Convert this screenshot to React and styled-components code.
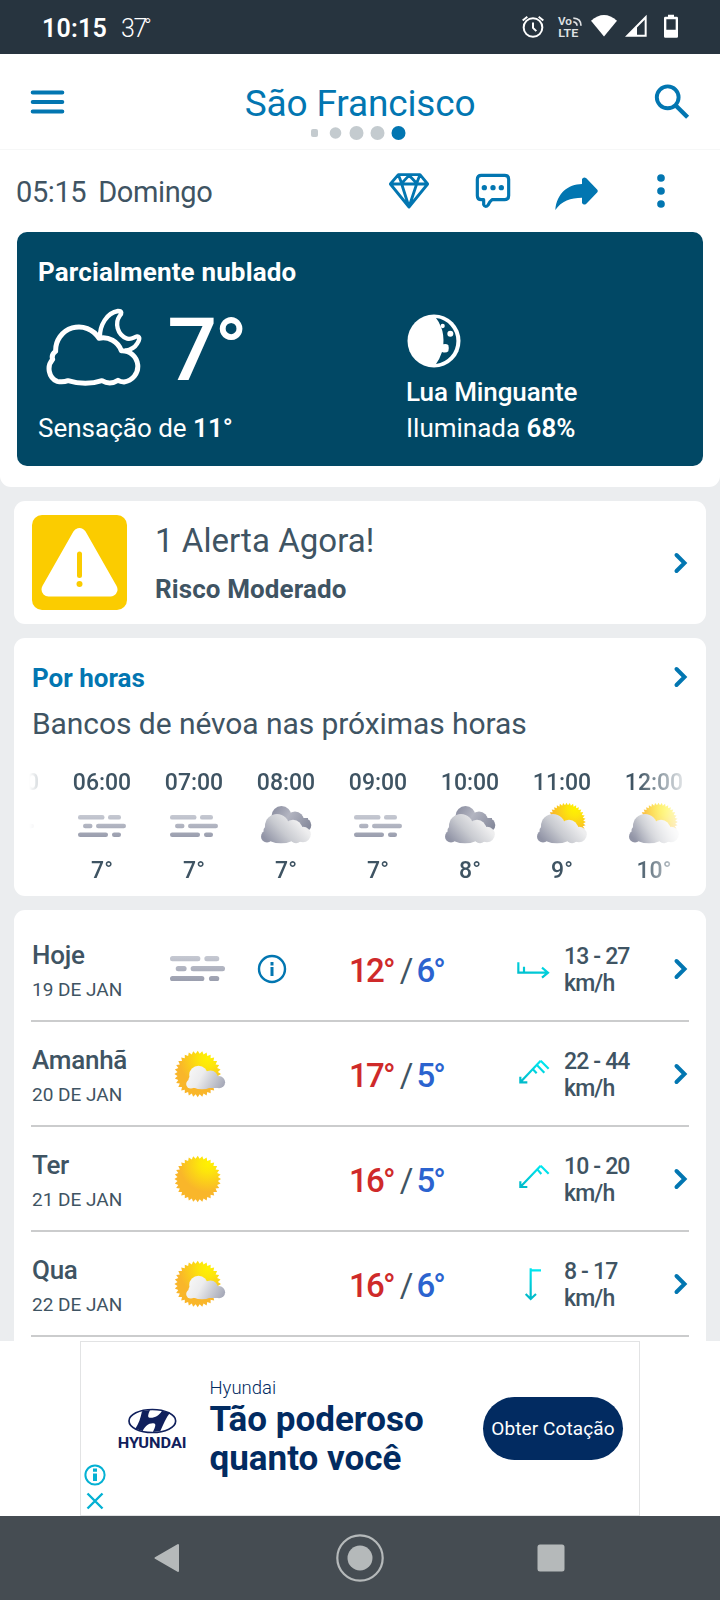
import React from "react";
import styled, { createGlobalStyle } from "styled-components";

const GlobalStyle = createGlobalStyle`
  * { box-sizing: border-box; }
  body { margin: 0; background: #fff; font-family: Roboto, sans-serif; }
  svg { display: block; flex: none; }
`;

const BLUE = "#0276b1";
const SLATE = "#3f5463";

const Screen = styled.div`
  width: 720px;
  height: 1600px;
  display: flex;
  flex-direction: column;
  overflow: hidden;
  color: ${SLATE};
  white-space: nowrap;
`;

/* status bar */

const StatusBar = styled.div`
  height: 54px;
  flex: none;
  display: flex;
  align-items: center;
  justify-content: space-between;
  padding: 0 34px 0 42px;
  background: #27343f;
  color: #fff;
`;

const StatusSide = styled.div`
  display: flex;
  align-items: center;
  padding-top: 4px;
`;

const Clock = styled.span`
  font-size: 25px;
  font-weight: 600;
  line-height: 50px;
  letter-spacing: 0.2px;
`;

const StatusTemp = styled.span`
  margin-left: 14px;
  font-size: 25px;
  font-weight: 300;
  line-height: 46px;
  letter-spacing: -1.4px;
`;

const Degree = styled.span`
  margin-left: -2px;
  font-size: 20px;
  line-height: 20px;
  vertical-align: 4px;
`;

/* top bar */

const TopBar = styled.header`
  height: 96px;
  flex: none;
  display: flex;
  align-items: center;
  justify-content: space-between;
  padding: 0 30px;
  border-bottom: 1px solid #f6f7f7;
`;

const SearchIcon = styled.svg`
  margin-bottom: 1px;
`;

const CityBlock = styled.div`
  display: flex;
  flex-direction: column;
  align-items: center;
  gap: 1px;
  padding-top: 20px;
`;

const City = styled.h1`
  margin: 0;
  font-size: 37px;
  font-weight: 400;
  line-height: 42px;
  letter-spacing: -0.15px;
  color: ${BLUE};
`;

/* summary */

const Content = styled.main`
  height: 1191px;
  flex: none;
  overflow: hidden;
  background: #ebedef;
`;

const Summary = styled.section`
  height: 337px;
  padding: 0 17px;
  background: #fff;
  border-radius: 0 0 11px 11px;
`;

const InfoRow = styled.div`
  height: 82px;
  display: flex;
  justify-content: space-between;
  align-items: center;
  padding-right: 35px;
`;

const LocalTime = styled.div`
  display: flex;
  gap: 12px;
  font-size: 29px;
  line-height: 40px;
  letter-spacing: -0.4px;
  padding-top: 2px;
  margin-left: -1px;
`;

const Panel = styled.div`
  height: 234px;
  display: grid;
  grid-template-columns: 368px 1fr;
  padding-left: 21px;
  border-radius: 10px;
  background: #014865;
  color: #fff;
`;

const PanelNow = styled.div`
  padding-top: 24px;
`;

const PanelMoon = styled.div`
  padding-top: 82px;

  svg { margin-left: 1px; }
`;

const MoonName = styled.div`
  margin-top: 6px;
  font-size: 26px;
  font-weight: 500;
  line-height: 36px;
  letter-spacing: -0.1px;
`;

const Condition = styled.div`
  font-size: 26px;
  font-weight: 700;
  line-height: 32px;
  letter-spacing: 0.15px;
`;

const NowRow = styled.div`
  display: flex;
  height: 88px;
  margin: 18px 0;
  padding: 1px 0 0 7px;
`;

const NowTemp = styled.span`
  margin: -1px 0 0 24px;
  font-size: 88px;
  font-weight: 500;
  line-height: 88px;
  letter-spacing: -3px;
`;

const PanelText = styled.div`
  font-size: 26px;
  line-height: ${(p) => p.$line || 32}px;
  b { font-weight: 600; }
`;

/* cards */

const Cards = styled.div`
  display: flex;
  flex-direction: column;
  gap: 14px;
  padding: 14px;
`;

const Card = styled.section`
  background: #fff;
  border-radius: 11px;
  flex: none;
`;

const AlertCard = styled(Card)`
  height: 123px;
  display: flex;
  align-items: center;
  padding: 0 18px;
`;

const AlertBadge = styled.div`
  width: 95px;
  height: 95px;
  display: flex;
  justify-content: center;
  border-radius: 10px;
  background: #fbcc00;
  padding-top: 12px;
`;

const AlertText = styled.div`
  flex: 1;
  align-self: flex-start;
  margin-left: 28px;
  padding-top: 20px;
`;

const AlertTitle = styled.div`
  font-size: 33px;
  line-height: 40px;
  letter-spacing: 0.05px;
`;

const AlertLevel = styled.div`
  margin-top: 12px;
  font-size: 26px;
  font-weight: 700;
  line-height: 32px;
  letter-spacing: 0.1px;
`;

const HoursCard = styled(Card)`
  height: 258px;
  padding-top: 24px;
`;

const HoursHead = styled.div`
  display: flex;
  justify-content: space-between;
  align-items: center;
  height: 32px;
  padding: 0 18px;
  font-size: 26px;
  font-weight: 700;
  color: ${BLUE};

  svg { margin-bottom: 2px; }
`;

const HoursSummary = styled.div`
  margin-top: 10px;
  padding: 0 18px;
  font-size: 30px;
  line-height: 40px;
  letter-spacing: -0.07px;
`;

const HoursStrip = styled.div`
  width: 663px;
  height: 126px;
  margin: 24px 0 0 15px;
  overflow: hidden;
  mask-image: linear-gradient(90deg, transparent 0, #000 45px, #000 607px, transparent 663px);
`;

const HoursTrack = styled.div`
  display: flex;
  margin-left: -65px;
`;

const Hour = styled.div`
  width: 92px;
  flex: none;
  display: flex;
  flex-direction: column;
  align-items: center;
  font-size: 23px;
  font-weight: 500;
  line-height: 30px;
`;

const HourIcon = styled.div`
  height: 58px;
  display: flex;
  align-items: center;
  padding-bottom: 3px;
`;

const DaysCard = styled(Card)`
  height: 600px;
  padding: 7px 17px 0;
`;

const Day = styled.div`
  height: 105px;
  display: grid;
  grid-template-columns: 135px 66px 116px 167px 48px 1fr 15px;
  align-items: center;
  border-bottom: 2px solid #cbcccd;
  padding: 0 1px;
`;

const DayLabel = styled.div`
  padding-top: 8px;
`;

const DayName = styled.div`
  font-size: 26px;
  font-weight: 500;
  line-height: 34px;
  letter-spacing: -0.25px;
`;

const DayDate = styled.div`
  font-size: 19px;
  line-height: 36px;
`;

const DayIcon = styled.div`
  display: flex;
  justify-content: center;
  width: 60px;
`;

const InfoCell = styled.div`
  padding-left: 24px;
`;

const DayTemps = styled.div`
  font-size: 33px;
  font-weight: 500;
  line-height: 40px;
  padding-top: 4px;
  display: flex;
`;

const Temp = styled.span`
  color: ${(p) => (p.$max ? "#cf2a2a" : "#2b63cf")};
  letter-spacing: -1.8px;
`;

const Slash = styled.span`
  margin: 0 3px 0 6px;
  font-weight: 400;
`;

const Wind = styled.div`
  font-size: 23px;
  font-weight: 500;
  line-height: 27px;
  letter-spacing: -0.85px;
  padding-top: 2px;
`;

/* ad */

const AdArea = styled.aside`
  height: 175px;
  flex: none;
  display: flex;
  justify-content: center;
  background: #fff;
`;

const AdBox = styled.div`
  position: relative;
  width: 560px;
  height: 175px;
  display: grid;
  grid-template-columns: 128.5px 1fr 140px;
  align-items: center;
  padding-right: 16px;
  border: 1px solid #e2e3e4;
  color: #022b61;
`;

const AdChoices = styled.div`
  position: absolute;
  left: 3px;
  bottom: 3px;
`;

const AdLogo = styled.div`
  padding-left: 36px;
`;

const AdBrand = styled.div`
  font-size: 18.5px;
  font-weight: 300;
  line-height: 22px;
  margin-bottom: 1px;
`;

const AdTitle = styled.div`
  font-size: 35px;
  font-weight: 700;
  line-height: 39px;
`;

const AdCopy = styled.div`
  padding-bottom: 3px;
`;

const AdButton = styled.button`
  height: 63px;
  padding: 0;
  border: 0;
  border-radius: 32px;
  background: #022b61;
  color: #fff;
  font-family: inherit;
  font-size: 19px;
  letter-spacing: 0.1px;
`;

const NavBar = styled.nav`
  height: 84px;
  flex: none;
  display: flex;
  align-items: center;
  justify-content: space-between;
  padding: 0 155px 0 153px;
  background: #454c52;
`;

const CLOUD = (
  <>
    <circle cx="21" cy="28" r="12" />
    <circle cx="37" cy="31" r="9.3" />
    <circle cx="47" cy="36.5" r="7.8" />
    <circle cx="11" cy="38.5" r="6" />
    <circle cx="14" cy="33" r="6.5" />
    <ellipse cx="25" cy="39" rx="14" ry="6.3" />
    <ellipse cx="40" cy="39.6" rx="6" ry="5.6" />
    <rect x="14" y="28" width="32" height="14" />
  </>
);

function teeth(cx, cy, outer, inner, count) {
  const pts = [];
  for (let i = 0; i < count * 2; i++) {
    const r = i % 2 ? inner : outer;
    const a = (Math.PI * i) / count;
    pts.push((cx + r * Math.sin(a)).toFixed(2) + "," + (cy - r * Math.cos(a)).toFixed(2));
  }
  return pts.join(" ");
}

const HiddenSvg = styled.svg`
  position: absolute;
`;

const Gradients = () => (
  <HiddenSvg width="0" height="0">
    <defs>
      <linearGradient id="front" gradientUnits="userSpaceOnUse" x1="14" y1="46" x2="40" y2="22">
        <stop offset="0" stopColor="#9194a6" />
        <stop offset="0.5" stopColor="#c8cad0" />
        <stop offset="1" stopColor="#eeeeef" />
      </linearGradient>
      <linearGradient id="back" gradientUnits="userSpaceOnUse" x1="18" y1="10" x2="52" y2="32">
        <stop offset="0" stopColor="#8d90a2" />
        <stop offset="0.4" stopColor="#b3b5c1" />
        <stop offset="1" stopColor="#85899b" />
      </linearGradient>
      <linearGradient id="small" gradientUnits="userSpaceOnUse" x1="22" y1="26" x2="54" y2="44">
        <stop offset="0" stopColor="#f6f6f6" />
        <stop offset="0.35" stopColor="#ececed" />
        <stop offset="1" stopColor="#a6a9b8" />
      </linearGradient>
      <radialGradient id="sun" cx="0.72" cy="0.16" r="0.62">
        <stop offset="0" stopColor="#fff200" />
        <stop offset="0.3" stopColor="#fde60b" />
        <stop offset="1" stopColor="#f9b62a" />
      </radialGradient>
      <linearGradient id="fog" gradientUnits="userSpaceOnUse" x1="0" y1="0" x2="0" y2="22">
        <stop offset="0" stopColor="#c6c9d2" />
        <stop offset="1" stopColor="#9a9eae" />
      </linearGradient>
      <linearGradient id="wind" gradientUnits="userSpaceOnUse" x1="20" y1="-45" x2="-5" y2="30">
        <stop offset="0" stopColor="#00eaf2" />
        <stop offset="1" stopColor="#00bccb" />
      </linearGradient>
    </defs>
  </HiddenSvg>
);

const Fog = ({ width }) => (
  <svg width={width} height={(width * 22) / 48} viewBox="0 0 48 22" fill="url(#fog)">
    <rect x="0" y="0" width="26.5" height="4.6" rx="2.2" />
    <rect x="30" y="0" width="13" height="4.6" rx="2.2" />
    <rect x="5" y="8.7" width="9.5" height="4.6" rx="2.2" />
    <rect x="18" y="8.7" width="30" height="4.6" rx="2.2" />
    <rect x="0" y="17.4" width="30" height="4.6" rx="2.2" />
    <rect x="34" y="17.4" width="9" height="4.6" rx="2.2" />
  </svg>
);

const Cloudy = () => (
  <svg width="60" height="58" viewBox="0 -1 60 58">
    <g fill="url(#back)">
      <circle cx="25.5" cy="18" r="10" />
      <circle cx="39" cy="22.5" r="9" />
      <circle cx="48.5" cy="27" r="6.8" />
      <rect x="28" y="20" width="24" height="12" />
    </g>
    <g fill="url(#front)">{CLOUD}</g>
  </svg>
);

const SunBehindCloud = () => (
  <svg width="60" height="58" viewBox="0 -1 60 58">
    <polygon fill="url(#sun)" points={teeth(34.5, 24, 19.3, 16.8, 36)} />
    <g fill="url(#front)">{CLOUD}</g>
  </svg>
);

const Sun = ({ cloud }) => (
  <svg width="60" height="60" viewBox="-1 0 60 60">
    <polygon fill="url(#sun)" points={teeth(29.7, 30, 23.3, 20.3, 32)} />
    {cloud && (
      <g fill="url(#small)">
        <circle cx="30.5" cy="31" r="9.3" />
        <circle cx="42.5" cy="34" r="7.6" />
        <circle cx="51" cy="38.2" r="6.1" />
        <circle cx="22.8" cy="40" r="4.6" />
        <circle cx="25" cy="36" r="4.6" />
        <ellipse cx="34" cy="40" rx="11" ry="5.2" />
        <rect x="24" y="33" width="27" height="11" rx="3" />
      </g>
    )}
  </svg>
);

const Chevron = () => (
  <svg width="15" height="22" viewBox="0 0 15 22" fill="none" stroke={BLUE} strokeWidth="4" strokeLinecap="round">
    <path d="M3.5 3L11.5 11L3.5 19" />
  </svg>
);

const NightCloud = () => (
  <svg width="98.3" height="80" viewBox="136 245 295 240" fill="none" stroke="#fff" strokeWidth="15" strokeLinejoin="round">
    <path d="M168 378A70 70 0 0 1 298 339A58 58 0 0 1 365 376A47.2 47.2 0 0 1 373 470Q362 470 355 465Q331 480 307 466Q258 482 205 466Q190 472 172 468A42 42 0 0 1 159 402Q154 388 168 378Z" />
    <path d="M301 337C299 300 322 262 355 257C368 257 367 265 360 272C346 292 351 328 383 340C398 343 402 335 413 333C423 334 419 345 413 354C406 366 396 373 377 376" strokeWidth="13" />
  </svg>
);

const Moon = () => (
  <svg width="54" height="54" viewBox="141 267 162 162">
    <circle cx="222" cy="348" r="79.5" fill="#fff" />
    <path fill="#014865" d="M228 279A69.5 69.5 0 0 1 228 417Q239 402 246 381Q258 385 265 379Q268 370 265 360Q259 356 250 358Q252 328 244 308Q238 291 228 279Z" />
    <circle cx="271" cy="326" r="9" fill="#fff" />
    <circle cx="248" cy="303" r="6.5" fill="#fff" />
  </svg>
);

const StatusIcons = () => (
  <svg width="166" height="30" viewBox="480 36.5 498 90" fill="#fff" stroke="none">
    <g fill="none" stroke="#fff" strokeWidth="6">
      <circle cx="519" cy="83" r="28" />
      <path d="M519 68V84L529 94" />
      <path d="M488 62L502 51M536 51L550 62" />
    </g>
    <text x="594" y="75" fontSize="31" fontWeight="600" fill="#dfe1e3" textLength="42" lengthAdjust="spacingAndGlyphs">Vo</text>
    <text x="595" y="111" fontSize="35" fontWeight="600" fill="#dfe1e3" textLength="60" lengthAdjust="spacingAndGlyphs">LTE</text>
    <path d="M640 55Q663 56 663 78M640 66Q651 67 651 78" fill="none" stroke="#dfe1e3" strokeWidth="5" />
    <path d="M693 63Q732 28 771 63L732 110Z" />
    <path d="M860 45V111H795ZM854 60L831 83V105H854Z" fillRule="evenodd" />
    <path d="M924 45H942V51H950Q954 51 954 55V110Q954 114 950 114H916Q912 114 912 110V55Q912 51 916 51H924ZM919 58V90H947V58Z" fillRule="evenodd" />
  </svg>
);

const Dots = () => (
  <svg width="104" height="14" viewBox="308 0 104 14" fill="#c4cbcf">
    <rect x="311" y="3" width="7" height="8" rx="2" />
    <circle cx="335.5" cy="7" r="5.8" />
    <circle cx="356.5" cy="7" r="7" />
    <circle cx="377.5" cy="7" r="7" />
    <circle cx="398.5" cy="7" r="7" fill={BLUE} />
  </svg>
);

const Actions = () => (
  <svg width="281" height="40" viewBox="81 510 843 120" fill="none" stroke={BLUE} strokeWidth="8.5" strokeLinejoin="round">
    <path d="M115 521H180L203 549L147 618L91 549ZM91 549H203M115 521L125 547L147 523L170 547L180 521M125 549L147 618L170 549" />
    <path d="M364 523H434Q446 523 446 535V584Q446 596 434 596H396Q389 601 385 611Q376 622 371 611V596H364Q352 596 352 584V535Q352 523 364 523Z" strokeWidth="9.5" />
    <g fill={BLUE} stroke="none">
      <circle cx="373" cy="560" r="8" />
      <circle cx="399" cy="560" r="8" />
      <circle cx="424" cy="560" r="8" />
      <path d="M586 627C590 577 624 550 666 549V534Q671 526 679 532L712 566Q715 570 712 574L679 608Q671 614 666 606V590C632 590 604 600 586 627Z" />
      <circle cx="903" cy="531" r="11.5" />
      <circle cx="903" cy="570" r="11.5" />
      <circle cx="903" cy="609" r="11.5" />
    </g>
  </svg>
);

const InfoIcon = () => (
  <svg width="30" height="30" viewBox="0 0 30 30" fill="none" stroke={BLUE} strokeWidth="2.4">
    <circle cx="15" cy="15" r="13" />
    <path d="M15 13V22M15 8V11.4" strokeWidth="3" />
  </svg>
);

const WINDS = {
  east: "M-44 -20V11H44M-27 -7V11M27 -4L45 11L27 26",
  southwestStrong: "M23 -40L-38 25M-38 8V25H-17M23 -40L47 -16M11 -28L34 -4M-1 -15L11 -2",
  southwest: "M23 -40L-38 24M-38 7V24H-17M23 -40L47 -16M13 -29L25 -15",
  south: "M-7 -47V45M-22 30L-7 45L9 30M-7 -41H24",
};

const WindIcon = ({ kind }) => (
  <svg width="34" height="34" viewBox="-51 -51 102 102" fill="none" stroke="url(#wind)" strokeWidth="6.5">
    <path d={WINDS[kind]} />
  </svg>
);

const HyundaiLogo = () => (
  <svg width="71" height="42" viewBox="141 234 213 126" fill="#10205c">
    <ellipse cx="247" cy="273" rx="70" ry="34.5" fill="none" stroke="#10205c" strokeWidth="5" />
    <path d="M216 244L240 240C234 254 232 262 239 263C255 264 267 257 276 242L300 248C289 262 280 282 271 303L249 306C256 291 260 281 250 280C236 279 224 290 218 303L196 296C206 282 212 264 216 244Z" />
    <text x="143" y="354" fontSize="42" fontWeight="700" textLength="207" lengthAdjust="spacingAndGlyphs">HYUNDAI</text>
  </svg>
);

const hourIcons = { fog: <Fog width={48} />, cloudy: <Cloudy />, sunny: <SunBehindCloud /> };
const dayIcons = { fog: <Fog width={55} />, sun: <Sun />, sunCloud: <Sun cloud /> };

const hours = [
  { time: "05:00", icon: "fog", temp: "7°" },
  { time: "06:00", icon: "fog", temp: "7°" },
  { time: "07:00", icon: "fog", temp: "7°" },
  { time: "08:00", icon: "cloudy", temp: "7°" },
  { time: "09:00", icon: "fog", temp: "7°" },
  { time: "10:00", icon: "cloudy", temp: "8°" },
  { time: "11:00", icon: "sunny", temp: "9°" },
  { time: "12:00", icon: "sunny", temp: "10°" },
];

const days = [
  { name: "Hoje", date: "19 DE JAN", icon: "fog", info: true, max: 12, min: 6, wind: "east", speed: "13 - 27" },
  { name: "Amanhã", date: "20 DE JAN", icon: "sunCloud", max: 17, min: 5, wind: "southwestStrong", speed: "22 - 44" },
  { name: "Ter", date: "21 DE JAN", icon: "sun", max: 16, min: 5, wind: "southwest", speed: "10 - 20" },
  { name: "Qua", date: "22 DE JAN", icon: "sunCloud", max: 16, min: 6, wind: "south", speed: "8 - 17" },
];

const App = () => {
  return (
    <>
      <GlobalStyle />
      <Gradients />
      <Screen>
        <StatusBar>
          <StatusSide>
            <Clock>10:15</Clock>
            <StatusTemp>37<Degree>°</Degree></StatusTemp>
          </StatusSide>
          <StatusIcons />
        </StatusBar>

        <TopBar>
          <svg width="36" height="28" viewBox="0 0 36 28" stroke={BLUE} strokeWidth="4" strokeLinecap="round">
            <path d="M2.7 4.5H32.3M2.7 14H32.3M2.7 23.4H32.3" />
          </svg>
          <CityBlock>
            <City>São Francisco</City>
            <Dots />
          </CityBlock>
          <SearchIcon width="36" height="36" viewBox="0 0 36 36" fill="none" stroke={BLUE} strokeWidth="3.9">
            <circle cx="13.7" cy="14.3" r="10.9" />
            <path d="M21.5 22.2L33.6 34.2" strokeWidth="4.4" />
          </SearchIcon>
        </TopBar>

        <Content>
          <Summary>
            <InfoRow>
              <LocalTime>
                <span>05:15</span>
                <span>Domingo</span>
              </LocalTime>
              <Actions />
            </InfoRow>
            <Panel>
              <PanelNow>
                <Condition>Parcialmente nublado</Condition>
                <NowRow>
                  <NightCloud />
                  <NowTemp>7°</NowTemp>
                </NowRow>
                <PanelText>Sensação de <b>11°</b></PanelText>
              </PanelNow>
              <PanelMoon>
                <Moon />
                <MoonName>Lua Minguante</MoonName>
                <PanelText $line={36}>Iluminada <b>68%</b></PanelText>
              </PanelMoon>
            </Panel>
          </Summary>

          <Cards>
            <AlertCard>
              <AlertBadge>
                <svg width="77" height="71" viewBox="0 0 77 71">
                  <path fill="#fff" stroke="#fff" strokeWidth="14" strokeLinejoin="round" d="M38.5 8L69.5 62.5H7.5Z" />
                  <path d="M38.5 27V48.5" stroke="#fbcc00" strokeWidth="5" strokeLinecap="round" />
                  <circle cx="38.5" cy="57" r="3" fill="#fbcc00" />
                </svg>
              </AlertBadge>
              <AlertText>
                <AlertTitle>1 Alerta Agora!</AlertTitle>
                <AlertLevel>Risco Moderado</AlertLevel>
              </AlertText>
              <Chevron />
            </AlertCard>

            <HoursCard>
              <HoursHead>
                <span>Por horas</span>
                <Chevron />
              </HoursHead>
              <HoursSummary>Bancos de névoa nas próximas horas</HoursSummary>
              <HoursStrip>
                <HoursTrack>
                  {hours.map((h) => (
                    <Hour key={h.time}>
                      <span>{h.time}</span>
                      <HourIcon>{hourIcons[h.icon]}</HourIcon>
                      <span>{h.temp}</span>
                    </Hour>
                  ))}
                </HoursTrack>
              </HoursStrip>
            </HoursCard>

            <DaysCard>
              {days.map((d) => (
                <Day key={d.name}>
                  <DayLabel>
                    <DayName>{d.name}</DayName>
                    <DayDate>{d.date}</DayDate>
                  </DayLabel>
                  <DayIcon>{dayIcons[d.icon]}</DayIcon>
                  <InfoCell>{d.info && <InfoIcon />}</InfoCell>
                  <DayTemps>
                    <Temp $max>{d.max}°</Temp>
                    <Slash>/</Slash>
                    <Temp>{d.min}°</Temp>
                  </DayTemps>
                  <WindIcon kind={d.wind} />
                  <Wind>
                    <div>{d.speed}</div>
                    <div>km/h</div>
                  </Wind>
                  <Chevron />
                </Day>
              ))}
            </DaysCard>
          </Cards>
        </Content>

        <AdArea>
          <AdBox>
            <AdLogo><HyundaiLogo /></AdLogo>
            <AdCopy>
              <AdBrand>Hyundai</AdBrand>
              <AdTitle>Tão poderoso<br />quanto você</AdTitle>
            </AdCopy>
            <AdButton>Obter Cotação</AdButton>
            <AdChoices>
              <svg width="22" height="50" viewBox="0 0 22 50" fill="none" stroke="#04b1d3" strokeWidth="2">
                <circle cx="11" cy="13" r="9.6" />
                <path d="M11 11.5V19M11 6.5V9.7" strokeWidth="4" />
                <path d="M3.5 31.5L18.5 46.5M18.5 31.5L3.5 46.5" strokeWidth="2.4" />
              </svg>
            </AdChoices>
          </AdBox>
        </AdArea>

        <NavBar>
          <svg width="27" height="30" viewBox="0 0 27 30" fill="#b5b9ba" stroke="#b5b9ba" strokeWidth="2" strokeLinejoin="round">
            <path d="M2.5 15L25 2V28Z" />
          </svg>
          <svg width="50" height="48" viewBox="-1 0 50 48">
            <circle cx="25" cy="24" r="22.7" fill="none" stroke="#b5b9ba" strokeWidth="2.2" />
            <circle cx="25" cy="24" r="12.5" fill="#b5b9ba" />
          </svg>
          <svg width="28" height="28" viewBox="0 0 28 28">
            <rect x="0.5" y="0.5" width="27" height="27" rx="2.5" fill="#b5b9ba" />
          </svg>
        </NavBar>
      </Screen>
    </>
  );
};

export default App;
